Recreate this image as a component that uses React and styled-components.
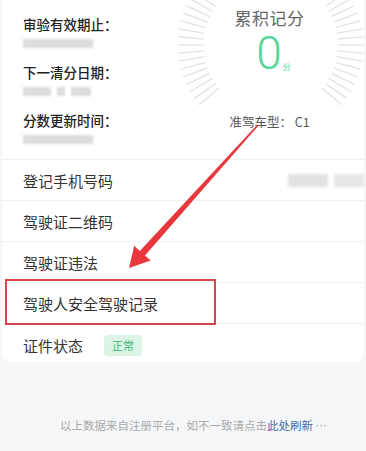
import React from 'react'
import styled, { createGlobalStyle } from 'styled-components'

const GlobalStyle = createGlobalStyle`
  html, body {
    margin: 0;
    padding: 0;
    background: #f5f6f8;
    font-family: "Noto Sans CJK SC", "Noto Sans", sans-serif;
  }
  * { box-sizing: border-box; }
`

const Page = styled.div`
  position: relative;
  width: 366px;
  height: 451px;
  overflow: hidden;
  background: #f5f6f8;
`

const Card = styled.div`
  margin: 0 2px;
  background: #fff;
  border-radius: 0 0 8px 8px;
`

const Top = styled.div`
  display: flex;
  height: 160px;
  border-bottom: 1px solid #efefef;
`

const InfoCol = styled.div`
  width: 173px;
  padding: 15px 0 0 21px;
  display: grid;
  align-content: start;
  row-gap: 15px;
`

const InfoItem = styled.div`
  display: flex;
  flex-direction: column;
`

const InfoLabel = styled.div`
  font-size: 13.5px;
  line-height: 18px;
  font-weight: 500;
  color: #222;
`

const Blur = styled.div`
  display: flex;
  gap: ${p => p.$gap || 0}px;
  margin-top: 6px;
  height: 9px;
  filter: blur(1.2px);
`

const BlurBlock = styled.span`
  width: ${p => p.$w}px;
  height: 100%;
  background: ${p => p.$c || '#dcdcdc'};
`

const Gauge = styled.div`
  position: relative;
  flex: 1;
  display: flex;
  flex-direction: column;
  align-items: center;
  padding-top: 7px;
`

const Ticks = styled.svg`
  position: absolute;
  left: 0;
  top: 0;
`

const GaugeTitle = styled.div`
  position: relative;
  font-size: 17px;
  line-height: 22px;
  color: #666;
  letter-spacing: 0.5px;
`

const Score = styled.div`
  position: relative;
  display: flex;
  align-items: flex-end;
  margin-top: 2px;
  padding-left: 8px;
  color: #4fd897;
`

const ScoreNum = styled.span`
  font-family: Roboto, "Liberation Sans", sans-serif;
  font-weight: 300;
  font-size: 46px;
  line-height: 44px;
`

const ScoreUnit = styled.span`
  font-size: 8px;
  line-height: 8px;
  margin: 0 0 4px 1px;
`

const CarType = styled.div`
  position: relative;
  margin-top: 37px;
  font-size: 12.5px;
  color: #555;
`

const Row = styled.div`
  position: relative;
  display: flex;
  align-items: center;
  height: ${p => p.$h || 41}px;
  padding: ${p => (p.$last ? '5px' : '0')} 0 0 21px;
  border-bottom: ${p => (p.$last ? 'none' : '1px solid #f0f0f0')};
  font-size: 15px;
  color: #333;

  ${p => p.$mark && `
    &::after {
      content: '';
      position: absolute;
      left: 3px;
      top: -4px;
      width: 207px;
      height: 42px;
      border: 2.5px solid #d3464a;
    }
  `}
`

const RowValue = styled.div`
  margin-left: auto;
  display: flex;
  gap: 6px;
  height: 13px;
  filter: blur(1.5px);
`

const Badge = styled.span`
  margin-left: 21px;
  padding: 3px 8px;
  font-size: 11px;
  line-height: 15px;
  color: #3bb774;
  background: #dcf4e6;
  border-radius: 4px;
`

const Footer = styled.div`
  padding: 55px 0 0 60px;
  font-size: 11.5px;
  color: #aaa;
  white-space: nowrap;
`

const FooterLink = styled.span`
  color: #3a6fa8;
`

const Arrow = styled.svg`
  position: absolute;
  left: 0;
  top: 0;
  pointer-events: none;
`

// side segments of the tick ring; the top of the ring is left open
const tickAngles = []
for (let a = 140; a <= 215; a += 5) tickAngles.push(a)
for (let a = -35; a <= 40; a += 5) tickAngles.push(a)

const GaugeTicks = () => (
  <Ticks width="190" height="160">
    {tickAngles.map(a => {
      const r = (a * Math.PI) / 180
      const cx = 95.5, cy = 45
      return (
        <line
          key={a}
          x1={cx + Math.cos(r) * 67}
          y1={cy + Math.sin(r) * 67}
          x2={cx + Math.cos(r) * 93}
          y2={cy + Math.sin(r) * 93}
          stroke="#e2e2e2"
          strokeWidth="1.3"
        />
      )
    })}
  </Ticks>
)

const info = [
  { label: '审验有效期止：', blocks: [[70]] },
  { label: '下一清分日期：', blocks: [[28], [8], [20]], gap: 6 },
  { label: '分数更新时间：', blocks: [[70]] },
]

const rows = ['登记手机号码', '驾驶证二维码', '驾驶证违法']

const App = () => (
  <Page>
    <GlobalStyle />
    <Card>
      <Top>
        <InfoCol>
          {info.map(item => (
            <InfoItem key={item.label}>
              <InfoLabel>{item.label}</InfoLabel>
              <Blur $gap={item.gap}>
                {item.blocks.map(([w], i) => <BlurBlock key={i} $w={w} />)}
              </Blur>
            </InfoItem>
          ))}
        </InfoCol>
        <Gauge>
          <GaugeTicks />
          <GaugeTitle>累积记分</GaugeTitle>
          <Score>
            <ScoreNum>0</ScoreNum>
            <ScoreUnit>分</ScoreUnit>
          </Score>
          <CarType>准驾车型：&nbsp;C1</CarType>
        </Gauge>
      </Top>
      {rows.map((text, i) => (
        <Row key={text}>
          {text}
          {i === 0 && (
            <RowValue>
              <BlurBlock $w={40} $c="#e2e2e2" />
              <BlurBlock $w={30} $c="#e6e6e6" />
            </RowValue>
          )}
        </Row>
      ))}
      <Row $mark>驾驶人安全驾驶记录</Row>
      <Row $last $h={38}>
        证件状态
        <Badge>正常</Badge>
      </Row>
    </Card>
    <Footer>
      以上数据来自注册平台，如不一致请点击<FooterLink>此处刷新</FooterLink> …
    </Footer>
    <Arrow width="366" height="451">
      <polygon
        points="258.6,125.5 145,255.5 150.6,260.6 129,268 134.2,245.8 139.8,250.9 257.4,124.5"
        fill="#e8383d"
      />
    </Arrow>
  </Page>
)

export default App
